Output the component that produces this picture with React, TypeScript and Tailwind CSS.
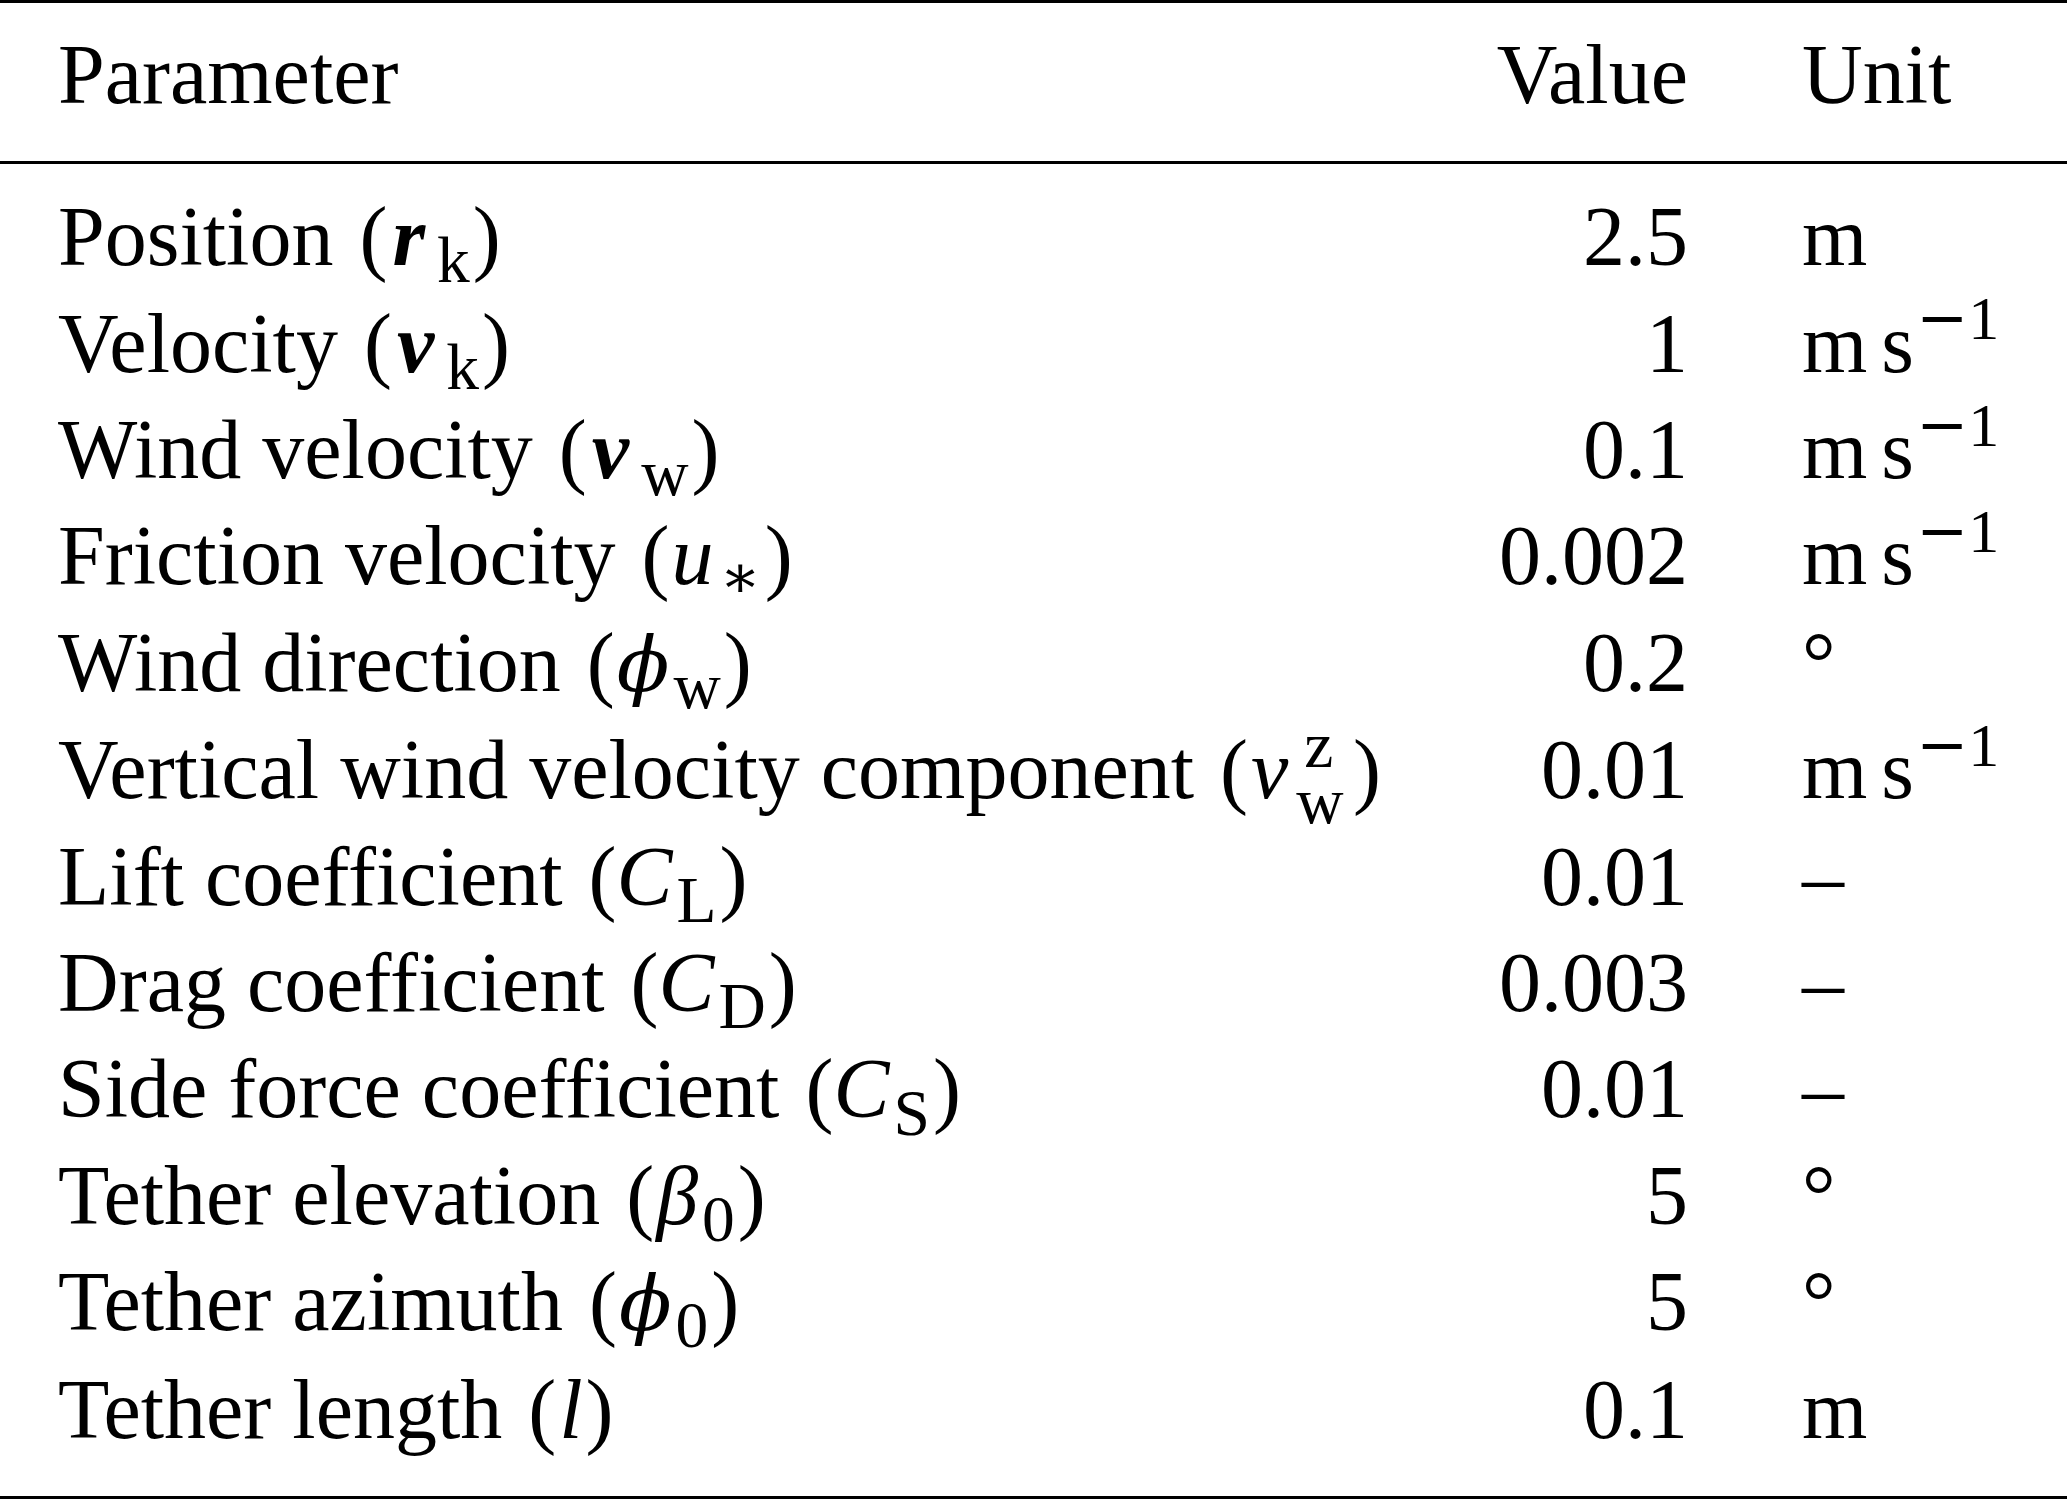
import type { ReactNode } from 'react';

// small helpers for the maths bits
const Sub = ({ children }: { children: ReactNode }) => (
  <sub className="-bottom-[0.26em] ml-[4px] mr-[3px] text-[0.78em] font-normal not-italic">{children}</sub>
);

const BoldVec = ({ children }: { children: ReactNode }) => (
  <span className="ml-[5px] mr-[8px] font-bold italic">{children}</span>
);

const Param = ({ label, children }: { label: string; children: ReactNode }) => (
  <>
    {label} <span className="ml-[5px]">({children})</span>
  </>
);

const Per = () => (
  <>
    m<span className="ml-[14px]">s</span>
    <sup className="-top-[0.52em] ml-[2px] text-[0.74em]">
      <span className="font-['DejaVu_Serif']">−</span>1
    </sup>
  </>
);

const rows: { param: ReactNode; value: string; unit: ReactNode }[] = [
  {
    param: (
      <Param label="Position">
        <BoldVec>r</BoldVec>
        <Sub>k</Sub>
      </Param>
    ),
    value: '2.5',
    unit: 'm',
  },
  {
    param: (
      <Param label="Velocity">
        <BoldVec>v</BoldVec>
        <Sub>k</Sub>
      </Param>
    ),
    value: '1',
    unit: <Per />,
  },
  {
    param: (
      <Param label="Wind velocity">
        <BoldVec>v</BoldVec>
        <Sub>w</Sub>
      </Param>
    ),
    value: '0.1',
    unit: <Per />,
  },
  {
    param: (
      <Param label="Friction velocity">
        <span className="ml-[2px] italic">u</span>
        <sub className="-bottom-[0.2em] ml-[6px] mr-[4px] text-[0.72em] font-['DejaVu_Serif']">∗</sub>
      </Param>
    ),
    value: '0.002',
    unit: <Per />,
  },
  {
    param: (
      <Param label="Wind direction">
        <span className="ml-[2px] text-[0.92em] italic font-['DejaVu_Serif']">ϕ</span>
        <Sub>w</Sub>
      </Param>
    ),
    value: '0.2',
    unit: '°',
  },
  {
    param: (
      <Param label="Vertical wind velocity component">
        <span className="ml-[3px] italic">v</span>
        <sub className="-bottom-[0.38em] ml-[8px] text-[0.78em]">w</sub>
        <sup className="-top-[0.48em] -ml-[0.6em] mr-[0.3em] text-[0.78em]">z</sup>
      </Param>
    ),
    value: '0.01',
    unit: <Per />,
  },
  {
    param: (
      <Param label="Lift coefficient">
        <span className="italic">C</span>
        <Sub>L</Sub>
      </Param>
    ),
    value: '0.01',
    unit: '–',
  },
  {
    param: (
      <Param label="Drag coefficient">
        <span className="italic">C</span>
        <Sub>D</Sub>
      </Param>
    ),
    value: '0.003',
    unit: '–',
  },
  {
    param: (
      <Param label="Side force coefficient">
        <span className="italic">C</span>
        <Sub>S</Sub>
      </Param>
    ),
    value: '0.01',
    unit: '–',
  },
  {
    param: (
      <Param label="Tether elevation">
        <span className="ml-[2px] italic">β</span>
        <Sub>0</Sub>
      </Param>
    ),
    value: '5',
    unit: '°',
  },
  {
    param: (
      <Param label="Tether azimuth">
        <span className="ml-[2px] text-[0.92em] italic font-['DejaVu_Serif']">ϕ</span>
        <Sub>0</Sub>
      </Param>
    ),
    value: '5',
    unit: '°',
  },
  {
    param: (
      <Param label="Tether length">
        <span className="ml-[3px] mr-[3px] italic">l</span>
      </Param>
    ),
    value: '0.1',
    unit: 'm',
  },
];

export default function App() {
  return (
    <div className="flex h-[1499px] w-[2067px] flex-col bg-white font-['Liberation_Serif','DejaVu_Serif',serif] text-[84px] leading-[106.4px] text-black">
      <div className="h-[4px] bg-black" />

      {/* header */}
      <div className="grid grid-cols-[1fr_200px_379px] pb-[33px] pl-[58px] pt-[19px]">
        <div>Parameter</div>
        <div className="text-right">Value</div>
        <div className="pl-[114px]">Unit</div>
      </div>

      <div className="h-[4px] bg-black" />

      {/* body */}
      <div className="flex flex-col pb-[33px] pt-[20px]">
        {rows.map((r, i) => (
          <div key={i} className="grid grid-cols-[1fr_200px_379px] whitespace-nowrap pl-[58px]">
            <div>{r.param}</div>
            <div className="text-right">{r.value}</div>
            <div className="pl-[114px]">{r.unit}</div>
          </div>
        ))}
      </div>

      <div className="h-[4px] bg-black" />
    </div>
  );
}
